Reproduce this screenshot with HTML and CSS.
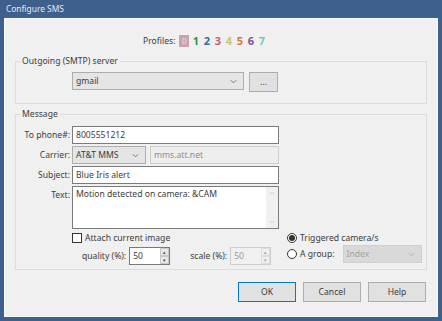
FILE: index.html
```html
<!DOCTYPE html>
<html lang="en">

<head>
    <meta charset="UTF-8">
    <title>Configure SMS</title>
    <link rel="stylesheet" href="styles.css">
</head>

<body>
    <div class="window">
        <div class="titlebar">Configure SMS</div>
        <div class="client">
            <div class="profiles">
                <span class="profiles-label">Profiles:</span>
                <span class="p p0">0</span>
                <span class="p p1">1</span>
                <span class="p p2">2</span>
                <span class="p p3">3</span>
                <span class="p p4">4</span>
                <span class="p p5">5</span>
                <span class="p p6">6</span>
                <span class="p p7">7</span>
            </div>

            <fieldset class="group group-smtp">
                <legend>Outgoing (SMTP) server</legend>
                <div class="smtp-row">
                    <div class="select select-server">
                        <span class="select-value">gmail</span>
                        <svg class="chevron" viewBox="0 0 8 5"><path d="M1 1l3 3 3-3" /></svg>
                    </div>
                    <button type="button" class="btn btn-small">...</button>
                </div>
            </fieldset>

            <fieldset class="group group-msg">
                <legend>Message</legend>
                <div class="form-grid">
                    <label class="lbl">To phone#:</label>
                    <input type="text" class="field" value="8005551212">

                    <label class="lbl">Carrier:</label>
                    <div class="carrier-row">
                        <div class="select select-carrier">
                            <span class="select-value">AT&amp;T MMS</span>
                            <svg class="chevron" viewBox="0 0 8 5"><path d="M1 1l3 3 3-3" /></svg>
                        </div>
                        <input type="text" class="field field-disabled" value="mms.att.net" disabled>
                    </div>

                    <label class="lbl">Subject:</label>
                    <input type="text" class="field" value="Blue Iris alert">

                    <label class="lbl lbl-top">Text:</label>
                    <div class="textbox">
                        <textarea class="textarea">Motion detected on camera: &amp;CAM</textarea>
                        <div class="scrollbar">
                            <svg viewBox="0 0 7 4"><path d="M1 3.5l2.5-2.5 2.5 2.5" /></svg>
                            <svg viewBox="0 0 7 4"><path d="M1 0.5l2.5 2.5 2.5-2.5" /></svg>
                        </div>
                    </div>
                </div>

                <div class="msg-bottom">
                    <div class="attach">
                        <label class="check-row">
                            <input type="checkbox" class="check">
                            <span>Attach current image</span>
                        </label>
                        <div class="spin-row">
                            <span class="spin-label">quality (%):</span>
                            <div class="spin">
                                <input type="text" class="spin-input" value="50">
                                <div class="spin-btns">
                                    <span class="spin-btn">&#9652;</span>
                                    <span class="spin-btn">&#9662;</span>
                                </div>
                            </div>
                            <span class="spin-label spin-label-scale">scale (%):</span>
                            <div class="spin spin-disabled">
                                <input type="text" class="spin-input" value="50" disabled>
                                <div class="spin-btns">
                                    <span class="spin-btn">&#9652;</span>
                                    <span class="spin-btn">&#9662;</span>
                                </div>
                            </div>
                        </div>
                    </div>
                    <div class="target">
                        <label class="radio-row">
                            <input type="radio" name="target" class="radio" checked>
                            <span>Triggered camera/s</span>
                        </label>
                        <div class="group-row">
                            <label class="radio-row">
                                <input type="radio" name="target" class="radio">
                                <span>A group:</span>
                            </label>
                            <div class="select select-group">
                                <span class="select-value">Index</span>
                                <svg class="chevron" viewBox="0 0 8 5"><path d="M1 1l3 3 3-3" /></svg>
                            </div>
                        </div>
                    </div>
                </div>
            </fieldset>

            <div class="actions">
                <button type="button" class="btn btn-default">OK</button>
                <button type="button" class="btn">Cancel</button>
                <button type="button" class="btn">Help</button>
            </div>
        </div>
    </div>
</body>

</html>
```

FILE: styles.css
```css
/* Reset and base */
* {
    margin: 0;
    padding: 0;
    box-sizing: border-box;
}

body,
input,
button,
textarea {
    font-family: "Noto Sans", sans-serif;
    font-size: 8.6px;
    color: #3c3c3c;
}

body {
    width: 442px;
    height: 321px;
    overflow: hidden;
}

/* Window frame */
.window {
    height: 321px;
    background: #3f5f8d;
    padding: 0 4px 4px 4px;
    display: flex;
    flex-direction: column;
}

.titlebar {
    height: 18px;
    line-height: 17px;
    padding-left: 2px;
    color: #e4eaf2;
    font-size: 8.4px;
}

.client {
    flex: 1;
    background: #f0f0f0;
    border: 1px solid #fafafa;
    display: flex;
    flex-direction: column;
    padding: 0 10px;
}

/* Profiles */
.profiles {
    margin-top: 15px;
    height: 14px;
    padding-left: 128px;
    display: flex;
    align-items: center;
    gap: 2px;
}

.profiles-label {
    margin-right: 2px;
}

.p {
    font-size: 11px;
    font-weight: bold;
    width: 9px;
    text-align: center;
    line-height: 12px;
}

.p0 {
    background: #c9a3ad;
    color: #e2c9cf;
    width: 10px;
    height: 12px;
    line-height: 12px;
    font-size: 9px;
}

.p1 { color: #2e9a3b; }
.p2 { color: #356ea9; }
.p3 { color: #c65b7d; }
.p4 { color: #cbc56c; }
.p5 { color: #d0773b; }
.p6 { color: #76579a; }
.p7 { color: #6ccab9; }

/* Group boxes */
.group {
    border: 1px solid #dcdcdc;
    padding: 0;
}

.group legend {
    margin-left: 4px;
    padding: 0 2px;
    line-height: 12px;
}

.group-smtp {
    margin-top: 7px;
    height: 49px;
}

.smtp-row {
    display: flex;
    gap: 5px;
    padding: 5px 0 0 56px;
}

.group-msg {
    margin-top: 4px;
    height: 162px;
}

/* Controls */
.select {
    position: relative;
    height: 18px;
    background: #e5e5e5;
    border: 1px solid #adadad;
    padding-left: 3px;
    line-height: 16px;
}

.chevron {
    position: absolute;
    right: 6px;
    top: 6px;
    width: 7px;
    height: 5px;
    fill: none;
    stroke: #6d6d6d;
    stroke-width: 1;
}

.select-server {
    width: 172px;
}

.select-carrier {
    width: 94px;
}

.select-group {
    width: 79px;
    background: #d9d9d9;
    border-color: #cfcfcf;
    color: #a3a3a3;
}

.select-group .chevron {
    stroke: #b0b0b0;
}

.btn {
    width: 58px;
    height: 20px;
    background: #e1e1e1;
    border: 1px solid #adadad;
}

.btn-small {
    width: 29px;
    height: 20px;
}

.btn-default {
    border-color: #0078d7;
}

.field {
    height: 18px;
    border: 1px solid #7a7a7a;
    background: #ffffff;
    padding-left: 3px;
    outline: none;
}

.field-disabled {
    flex: 1;
    background: #eeeeee;
    border-color: #cccccc;
    color: #8d8d8d;
}

/* Message form */
.form-grid {
    display: grid;
    grid-template-columns: 54px 207px;
    column-gap: 2px;
    row-gap: 2px;
    padding-top: 6px;
    align-items: center;
}

.lbl {
    text-align: right;
}

.lbl-top {
    align-self: start;
    padding-top: 3px;
}

.carrier-row {
    display: flex;
    gap: 4px;
}

.textbox {
    display: flex;
    height: 43px;
    border: 1px solid #7a7a7a;
    background: #ffffff;
}

.textarea {
    flex: 1;
    border: none;
    resize: none;
    outline: none;
    overflow: hidden;
    padding: 1px 3px;
    line-height: 12px;
}

.scrollbar {
    width: 12px;
    background: #f0f0f0;
    display: flex;
    flex-direction: column;
    justify-content: space-between;
    align-items: center;
    padding: 4px 0;
}

.scrollbar svg {
    width: 6px;
    height: 4px;
    fill: none;
    stroke: #c3c3c3;
}

.msg-bottom {
    display: flex;
    gap: 8px;
    padding: 3px 0 0 56px;
}

.attach {
    width: 207px;
}

.check-row,
.radio-row {
    display: flex;
    align-items: center;
    gap: 3px;
    height: 12px;
}

.check {
    appearance: none;
    width: 10px;
    height: 10px;
    border: 1px solid #333333;
    background: #ffffff;
}

.radio {
    appearance: none;
    width: 10px;
    height: 10px;
    border: 1px solid #333333;
    border-radius: 50%;
    background: #ffffff;
    display: flex;
    align-items: center;
    justify-content: center;
}

.radio:checked::after {
    content: "";
    width: 6px;
    height: 6px;
    border-radius: 50%;
    background: #333333;
}

.spin-row {
    display: flex;
    align-items: center;
    margin-top: 3px;
    padding-left: 10px;
}

.spin-label {
    margin-right: 3px;
}

.spin-label-scale {
    margin-left: 20px;
}

.spin {
    display: flex;
    width: 41px;
    height: 18px;
    border: 1px solid #7a7a7a;
    background: #ffffff;
}

.spin-input {
    flex: 1;
    width: 10px;
    border: none;
    outline: none;
    padding-left: 3px;
    background: transparent;
}

.spin-btns {
    width: 9px;
    display: flex;
    flex-direction: column;
}

.spin-btn {
    flex: 1;
    background: #e8e8e8;
    border: 1px solid #c9c9c9;
    font-size: 5px;
    line-height: 6px;
    text-align: center;
    color: #444444;
}

.spin-disabled {
    border-color: #cccccc;
    background: #f0f0f0;
}

.spin-disabled .spin-input {
    color: #9a9a9a;
}

.spin-disabled .spin-btn {
    color: #a0a0a0;
    background: #f0f0f0;
    border-color: #dcdcdc;
}

.target {
    display: flex;
    flex-direction: column;
    gap: 1px;
}

.group-row {
    display: flex;
    align-items: center;
    gap: 8px;
    height: 18px;
}

/* Buttons */
.actions {
    display: flex;
    justify-content: flex-end;
    gap: 7px;
    margin-top: 12px;
    padding-right: 1px;
}
```
